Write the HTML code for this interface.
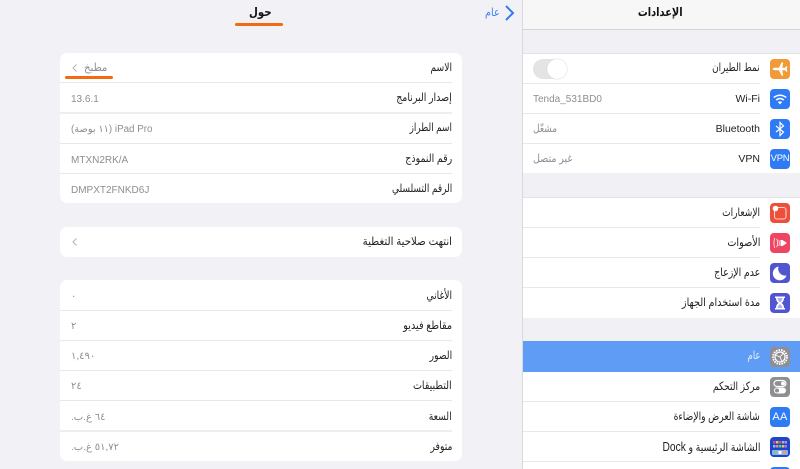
<!DOCTYPE html>
<html lang="ar">
<head>
<meta charset="utf-8">
<style>
html,body{margin:0;padding:0;width:800px;height:469px;overflow:hidden;background:#f1f1f6;font-family:"Liberation Sans","DejaVu Sans",sans-serif;color:#222;}
*{box-sizing:border-box}
#w{position:absolute;left:0;top:0;width:800px;height:469px;overflow:hidden}
.abs{position:absolute}
.t{position:absolute;font-size:11.5px;line-height:14px;white-space:nowrap;direction:rtl;transform-origin:right center}
.l{font-size:10.5px}
.v{position:absolute;font-size:10px;line-height:14px;white-space:nowrap;color:#8e8e93;transform-origin:left center}
.a{font-size:11px}
.card{position:absolute;left:60px;width:402px;background:#fff;border-radius:7px}
.sep{position:absolute;height:1px;background:#e8e8ea}
.row{position:absolute;left:523px;width:277px;height:30px;background:#fff}
.ic{position:absolute;left:770px;width:20px;height:20px;border-radius:4px;overflow:hidden}
.ic svg{display:block;width:20px;height:20px}
</style>
</head>
<body>
<div id="w">
<!-- Left pane -->
<div class="abs" style="left:0;top:0;width:522px;height:469px;background:#f1f1f6"></div>
<div class="t" style="right:528px;top:5px;font-size:12px;font-weight:bold;color:#111;transform:scaleX(.85)">حول</div>
<div class="abs" style="left:235px;top:23px;width:48px;height:3px;border-radius:2px;background:#f26a12"></div>
<div class="t" style="right:300px;top:6px;color:#3a82f7;font-size:11px;transform:scaleX(.88)">عام</div>
<svg class="abs" style="left:504px;top:5px" width="12" height="16" viewBox="0 0 12 16"><path d="M2 1 L9 8 L2 15" fill="none" stroke="#2f7bf6" stroke-width="2"/></svg>

<div class="card" style="top:53px;height:150px"></div>
<div class="sep" style="left:60px;top:82px;width:392px"></div>
<div class="sep" style="left:60px;top:112px;width:392px;height:2px;background:#eeeef0"></div>
<div class="sep" style="left:60px;top:143px;width:392px"></div>
<div class="sep" style="left:60px;top:173px;width:392px"></div>
<div class="t" style="right:348px;top:61px;transform:scaleX(.8)">الاسم</div>
<div class="t" style="right:348px;top:91px;transform:scaleX(.82)">إصدار البرنامج</div>
<div class="t" style="right:348px;top:121px;transform:scaleX(.77)">اسم الطراز</div>
<div class="t" style="right:348px;top:152px;transform:scaleX(.82)">رقم النموذج</div>
<div class="t" style="right:348px;top:182px;transform:scaleX(.78)">الرقم التسلسلي</div>
<div class="v a" style="left:84px;top:61px;direction:rtl;transform:scaleX(.92)">مطبخ</div>
<svg class="abs" style="left:71px;top:63px" width="7" height="10" viewBox="0 0 7 10"><path d="M5.5 1.5 L2 5 L5.5 8.5" fill="none" stroke="#b4b4b8" stroke-width="1"/></svg>
<div class="abs" style="left:65px;top:76px;width:48px;height:3px;border-radius:2px;background:#f26a12"></div>
<div class="v" style="left:71px;top:93px">13.6.1</div>
<div class="v" style="left:71px;top:123px;direction:rtl;transform:scaleX(.98)">iPad Pro (١١ بوصة)</div>
<div class="v" style="left:71px;top:154px">MTXN2RK/A</div>
<div class="v" style="left:71px;top:184px">DMPXT2FNKD6J</div>

<div class="card" style="top:227px;height:30px"></div>
<div class="t" style="right:348px;top:235px;transform:scaleX(.885)">انتهت صلاحية التغطية</div>
<svg class="abs" style="left:71px;top:237px" width="7" height="10" viewBox="0 0 7 10"><path d="M5.5 1.5 L2 5 L5.5 8.5" fill="none" stroke="#b4b4b8" stroke-width="1"/></svg>

<div class="card" style="top:280px;height:181px"></div>
<div class="sep" style="left:60px;top:310px;width:392px"></div>
<div class="sep" style="left:60px;top:340px;width:392px"></div>
<div class="sep" style="left:60px;top:370px;width:392px"></div>
<div class="sep" style="left:60px;top:400px;width:392px"></div>
<div class="sep" style="left:60px;top:430px;width:392px;height:2px;background:#eeeef0"></div>
<div class="t" style="right:348px;top:289px;transform:scaleX(.8)">الأغاني</div>
<div class="t" style="right:348px;top:319px;transform:scaleX(.84)">مقاطع فيديو</div>
<div class="t" style="right:348px;top:349px;transform:scaleX(.8)">الصور</div>
<div class="t" style="right:348px;top:379px;transform:scaleX(.83)">التطبيقات</div>
<div class="t" style="right:348px;top:410px;transform:scaleX(.8)">السعة</div>
<div class="t" style="right:348px;top:440px;transform:scaleX(.8)">متوفر</div>
<div class="v" style="left:71px;top:290px">٠</div>
<div class="v" style="left:71px;top:320px">٢</div>
<div class="v" style="left:71px;top:350px">١,٤٩٠</div>
<div class="v" style="left:71px;top:380px">٢٤</div>
<div class="v" style="left:71px;top:411px;direction:rtl">٦٤ غ.ب.</div>
<div class="v" style="left:71px;top:441px;direction:rtl">٥١,٧٢ غ.ب.</div>

<!-- Right pane -->
<div class="abs" style="left:522px;top:0;width:278px;height:469px;background:#f0f0f5;border-left:1px solid #d9d9dd"></div>
<div class="abs" style="left:523px;top:0;width:277px;height:30px;background:#f7f7f7;border-bottom:1px solid #d4d4d8"></div>
<div class="t" style="right:117px;top:5px;font-size:12px;font-weight:bold;color:#111;transform:scaleX(.82)">الإعدادات</div>

<div class="row" style="top:53px;height:120px;border-top:1px solid #e3e3e6"></div>
<div class="sep" style="left:523px;top:83px;width:237px"></div>
<div class="sep" style="left:523px;top:113px;width:237px"></div>
<div class="sep" style="left:523px;top:143px;width:237px"></div>
<div class="abs" style="left:533px;top:59px;width:34px;height:20px;border-radius:10px;background:#e4e4e4"></div>
<div class="abs" style="left:547px;top:59px;width:20px;height:20px;border-radius:10px;background:#fff;box-shadow:0 0 1px #aaa"></div>
<div class="t" style="right:40px;top:61px;transform:scaleX(.77)">نمط الطيران</div>
<div class="t l" style="right:40px;top:92px;direction:ltr">Wi-Fi</div>
<div class="t l" style="right:40px;top:122px;direction:ltr">Bluetooth</div>
<div class="t l" style="right:40px;top:152px;direction:ltr">VPN</div>
<div class="v" style="left:533px;top:93px">Tenda_531BD0</div>
<div class="v a" style="left:533px;top:122px;direction:rtl;transform:scaleX(.82)">مشغّل</div>
<div class="v a" style="left:533px;top:152px;direction:rtl;transform:scaleX(.87)">غير متصل</div>

<div class="ic" style="top:59px;background:#f29a38"><svg viewBox="0 0 20 20"><path d="M2.5 10 Q3 9 5 8.8 L9 8.8 L11.5 3.5 L13.2 3.5 L12.3 8.8 L15 8.8 L16.2 7.2 L17.3 7.2 L16.8 10 L17.3 12.8 L16.2 12.8 L15 11.2 L12.3 11.2 L13.2 16.5 L11.5 16.5 L9 11.2 L5 11.2 Q3 11 2.5 10Z" fill="#fff"/></svg></div>
<div class="ic" style="top:89px;background:#2f7bf6"><svg viewBox="0 0 20 20" fill="none" stroke="#fff" stroke-width="1.5"><path d="M3.8 8.5 Q10 4 16.2 8.5"/><path d="M6.2 11 Q10 8 13.8 11"/><path d="M10 15.5 L7.8 13 Q10 11.7 12.2 13Z" fill="#fff" stroke="none"/></svg></div>
<div class="ic" style="top:119px;background:#2f7bf6"><svg viewBox="0 0 20 20" fill="none" stroke="#fff" stroke-width="1.2"><path d="M6 7 L13.5 13 L10 16.5 L10 3.5 L13.5 7 L6 13"/></svg></div>
<div class="ic" style="top:149px;background:#2f7bf6;color:#fff;font-size:9.5px;line-height:20px;text-align:center;letter-spacing:-.3px">VPN</div>

<div class="row" style="top:197px;height:121px;border-top:1px solid #e3e3e6"></div>
<div class="sep" style="left:523px;top:227px;width:237px"></div>
<div class="sep" style="left:523px;top:257px;width:237px"></div>
<div class="sep" style="left:523px;top:287px;width:237px"></div>
<div class="t" style="right:40px;top:206px;transform:scaleX(.79)">الإشعارات</div>
<div class="t" style="right:40px;top:236px;transform:scaleX(.84)">الأصوات</div>
<div class="t" style="right:40px;top:266px;transform:scaleX(.82)">عدم الإزعاج</div>
<div class="t" style="right:40px;top:296px;transform:scaleX(.84)">مدة استخدام الجهاز</div>
<div class="ic" style="top:203px;background:#ee4f3a"><svg viewBox="0 0 20 20"><rect x="4.5" y="4.5" width="11.5" height="11.5" rx="2.5" fill="none" stroke="#fff" stroke-width="1.1" opacity=".75"/><circle cx="5.5" cy="5.5" r="2.8" fill="#fff"/></svg></div>
<div class="ic" style="top:233px;background:#ee4560"><svg viewBox="0 0 20 20"><path d="M10.5 7 H12.5 L17 10 L12.5 13 H10.5Z" fill="#fff"/><path d="M8.8 7 Q9.8 10 8.8 13 M6.8 5.8 Q8.2 10 6.8 14.2 M4.8 5 Q3 10 4.8 15" fill="none" stroke="#fff" stroke-width=".9" opacity=".85"/></svg></div>
<div class="ic" style="top:263px;background:#5155cf"><svg viewBox="0 0 20 20"><path d="M8.5 3.5 A7 7 0 1 0 16.5 12.5 A7 7 0 0 1 8.5 3.5Z" fill="#fff"/></svg></div>
<div class="ic" style="top:293px;background:#5155cf"><svg viewBox="0 0 20 20"><path d="M5 3.5 H15 V5 H14 Q14 8.5 11.5 10 Q14 11.5 14 15 H15 V16.5 H5 V15 H6 Q6 11.5 8.5 10 Q6 8.5 6 5 H5Z" fill="#fff"/><path d="M7.5 5 H12.5 Q12.3 8 10 9.2 Q7.7 8 7.5 5Z M10 11 Q8 12.5 7.5 15 H12.5 Q12 12.5 10 11Z" fill="#7074d8" opacity=".55"/></svg></div>

<div class="abs" style="left:523px;top:341px;width:277px;height:30.5px;background:#5f9cf6"></div>
<div class="row" style="top:372px;height:97px"></div>
<div class="sep" style="left:523px;top:401px;width:237px"></div>
<div class="sep" style="left:523px;top:431px;width:237px"></div>
<div class="sep" style="left:523px;top:461px;width:237px"></div>
<div class="t" style="right:40px;top:349px;color:#e6effd;transform:scaleX(.74)">عام</div>
<div class="t" style="right:40px;top:380px;transform:scaleX(.8)">مركز التحكم</div>
<div class="t" style="right:40px;top:410px;transform:scaleX(.8)">شاشة العرض والإضاءة</div>
<div class="t" style="right:40px;top:440px;transform:scaleX(.82)">الشاشة الرئيسية و <span style="font-size:12.5px">Dock</span></div>
<div class="ic" style="top:347px;background:#8f8f93"><svg viewBox="0 0 20 20" fill="none" stroke="#fff"><circle cx="10" cy="10" r="7" stroke-width="1.8" stroke-dasharray="1.6 1"/><circle cx="10" cy="10" r="5" stroke-width="1.2"/><path d="M5.5 8 L10 10 L13.2 6.2 M10 10 L12 14.5" stroke-width=".9"/></svg></div>
<div class="ic" style="top:377px;background:#8f8f93"><svg viewBox="0 0 20 20"><rect x="4" y="3.5" width="12" height="6" rx="3" fill="none" stroke="#fff" stroke-width="1.2"/><circle cx="13" cy="6.5" r="2" fill="#fff"/><rect x="4" y="10.5" width="12" height="6" rx="3" fill="#fff"/><circle cx="7" cy="13.5" r="2" fill="#8f8f93"/></svg></div>
<div class="ic" style="top:407px;background:#2f7bf6;color:#fff;font-size:11px;line-height:21px;text-align:center;letter-spacing:.3px">AA</div>
<div class="ic" style="top:437px;background:#1c46cf"><svg viewBox="0 0 20 20"><g fill="#e0505a"><rect x="3" y="4" width="2.5" height="2.5"/><rect x="9" y="4" width="2.5" height="2.5"/></g><g fill="#f2c14a"><rect x="6" y="4" width="2.5" height="2.5"/><rect x="12" y="8" width="2.5" height="2.5"/></g><g fill="#9bd"><rect x="12" y="4" width="2.5" height="2.5"/><rect x="3" y="8" width="2.5" height="2.5"/></g><g fill="#e88"><rect x="15" y="4" width="2" height="2.5"/><rect x="6" y="8" width="2.5" height="2.5"/></g><rect x="9" y="8" width="2.5" height="2.5" fill="#6c6"/><rect x="15" y="8" width="2" height="2.5" fill="#a7d"/><rect x="2" y="13" width="16" height="5" rx="1" fill="#8fb0ee"/><rect x="4" y="14" width="3" height="3" fill="#7c7"/><rect x="8.5" y="14" width="3" height="3" fill="#fff"/><rect x="13" y="14" width="3" height="3" fill="#e96"/></svg></div>
<div class="ic" style="top:467px;background:#2f7bf6"></div>
</div>
</body>
</html>
